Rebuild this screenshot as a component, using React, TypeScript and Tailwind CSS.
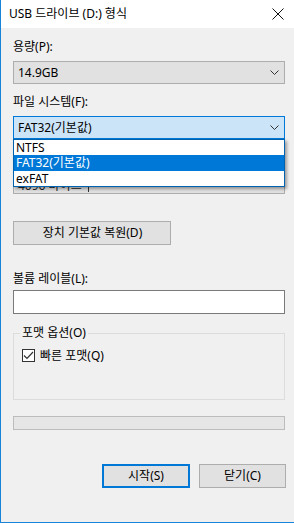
import React from "react";

const font = "font-['Noto_Sans','Noto_Sans_CJK_KR',sans-serif] text-[12px] text-black";

const Chevron = () => (
  <svg width="9" height="6" viewBox="0 0 9 6" className="shrink-0">
    <polyline points="0.5,0.5 4.5,4.5 8.5,0.5" fill="none" stroke="#333" strokeWidth="1" />
  </svg>
);

const Combo = ({ value, focused }: { value: string; focused?: boolean }) => (
  <div
    className={
      "flex h-[23px] w-[272px] items-center justify-between border pl-[4px] pr-[5px] " +
      (focused ? "border-[#0078d7] bg-[#cce4f7]" : "border-[#adadad] bg-[#e1e1e1]")
    }
  >
    <span className="leading-none">{value}</span>
    <Chevron />
  </div>
);

const Label = ({ children, className = "" }: { children: React.ReactNode; className?: string }) => (
  <div className={"h-[16px] leading-[16px] " + className}>{children}</div>
);

const App = () => {
  return (
    <div className={"h-[523px] w-[294px] overflow-hidden border-b border-l border-[#1883d7] bg-[#f0f0f0] " + font}>
      <div className="flex h-[28px] items-center justify-between bg-white pl-[8px] pr-[10px]">
        <span className="leading-none">USB 드라이브 (D:) 형식</span>
        <svg width="12" height="12" viewBox="0 0 12 12">
          <path d="M0.5 0.5 L11.5 11.5 M11.5 0.5 L0.5 11.5" stroke="#111" strokeWidth="1" />
        </svg>
      </div>

      <div className="flex flex-col pl-[12px]">
        <Label className="mt-[11px]">용량(P):</Label>
        <div className="mt-[6px]">
          <Combo value="14.9GB" />
        </div>

        <Label className="mt-[10px]">파일 시스템(F):</Label>
        <div className="relative z-10 mt-[6px]">
          <Combo value="FAT32(기본값)" focused />
          <div className="absolute left-0 top-full w-[272px] border border-[#0063b1] bg-white shadow-[2px_2px_3px_rgba(0,0,0,0.35)]">
            <div className="h-[15px] pl-[2px] leading-[15px]">NTFS</div>
            <div className="h-[16px] bg-[#0078d7] pl-[2px] leading-[16px] text-white">FAT32(기본값)</div>
            <div className="h-[15px] pl-[2px] leading-[15px]">exFAT</div>
          </div>
        </div>

        {/* hidden behind the open list */}
        <Label className="invisible mt-[10px]">할당 단위 크기(A):</Label>
        <div className="mt-[6px] flex h-[23px] w-[272px] items-start border border-[#adadad] bg-[#e1e1e1] pl-[4px] pt-[8px]">
          <span className="leading-[12px] text-[#222]">4096 바이트</span>
          <span className="ml-[6px] mt-[2px] h-[10px] w-px bg-[#333]" />
        </div>

        <button className="mt-[27px] h-[24px] w-[158px] border border-[#adadad] bg-[#e1e1e1] pl-[1px] leading-none">
          장치 기본값 복원(D)
        </button>

        <Label className="mt-[26px]">볼륨 레이블(L):</Label>
        <div className="mt-[3px] h-[24px] w-[272px] border border-[#7a7a7a] bg-white" />

        <fieldset className="mt-[12px] h-[74px] w-[272px] border border-[#dcdcdc] pl-[8px]">
          <legend className="ml-[-2px] px-[2px] leading-[14px]">포맷 옵션(O)</legend>
          <label className="mt-[9px] flex items-center gap-[5px]">
            <span className="flex h-[13px] w-[13px] items-center justify-center border border-[#333] bg-white">
              <svg width="11" height="9" viewBox="0 0 11 9">
                <polyline points="1,4.5 4,7.5 10,1" fill="none" stroke="#333" strokeWidth="1.2" />
              </svg>
            </span>
            <span className="leading-none">빠른 포맷(Q)</span>
          </label>
        </fieldset>

        <div className="mt-[16px] h-[14px] w-[272px] border border-[#bcbcbc] bg-[#e6e6e6]" />

        <div className="mt-[34px] flex w-[273px] justify-end gap-[9px]">
          <button className="h-[24px] w-[88px] border-2 border-[#0078d7] bg-[#e1e1e1] leading-none">
            시작(S)
          </button>
          <button className="h-[24px] w-[87px] border border-[#adadad] bg-[#e1e1e1] leading-none">
            닫기(C)
          </button>
        </div>
      </div>
    </div>
  );
};

export default App;
